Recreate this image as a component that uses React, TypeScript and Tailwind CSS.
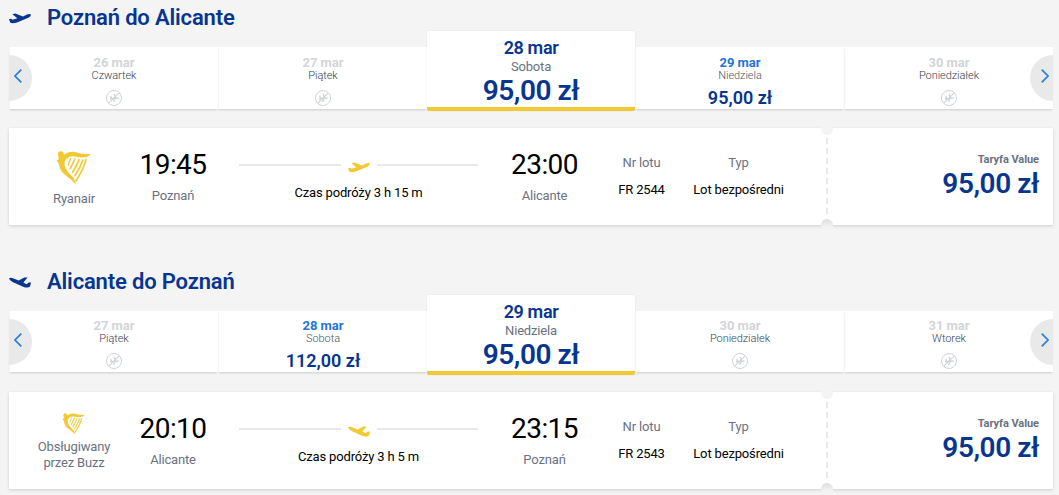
import React from 'react';

interface DayOption {
  date: string;
  weekday: string;
  price?: string;
  selected?: boolean;
}

type Direction = 'out' | 'back';

interface Flight {
  title: string;
  direction: Direction;
  days: DayOption[];
  carrier: string[];
  from: string;
  to: string;
  departure: string;
  arrival: string;
  duration: string;
  number: string;
  price: string;
}

const flights: Flight[] = [
  {
    title: 'Poznań do Alicante',
    direction: 'out',
    days: [
      { date: '26 mar', weekday: 'Czwartek' },
      { date: '27 mar', weekday: 'Piątek' },
      { date: '28 mar', weekday: 'Sobota', price: '95,00 zł', selected: true },
      { date: '29 mar', weekday: 'Niedziela', price: '95,00 zł' },
      { date: '30 mar', weekday: 'Poniedziałek' },
    ],
    carrier: ['Ryanair'],
    from: 'Poznań',
    to: 'Alicante',
    departure: '19:45',
    arrival: '23:00',
    duration: 'Czas podróży 3 h 15 m',
    number: 'FR 2544',
    price: '95,00 zł',
  },
  {
    title: 'Alicante do Poznań',
    direction: 'back',
    days: [
      { date: '27 mar', weekday: 'Piątek' },
      { date: '28 mar', weekday: 'Sobota', price: '112,00 zł' },
      { date: '29 mar', weekday: 'Niedziela', price: '95,00 zł', selected: true },
      { date: '30 mar', weekday: 'Poniedziałek' },
      { date: '31 mar', weekday: 'Wtorek' },
    ],
    carrier: ['Obsługiwany', 'przez Buzz'],
    from: 'Alicante',
    to: 'Poznań',
    departure: '20:10',
    arrival: '23:15',
    duration: 'Czas podróży 3 h 5 m',
    number: 'FR 2543',
    price: '95,00 zł',
  },
];

// --- ICONS ---
const PlaneIcon = ({ direction, className }: { direction: Direction; className: string }) => (
  <svg viewBox="0 0 66 32" className={className} fill="currentColor">
    {direction === 'out' ? (
      <path d="M0 18 L6 17 L11 20 L25 15 L10 3 L19 1 L42 10 L54 4 Q64 1 66 5 Q66 10 58 14 L24 28 Q12 32 4 29 Z" />
    ) : (
      <path d="M0 4 Q3 0 12 3 L29 10 L46 1 L56 1 L43 16 L53 21 L59 16 L66 16 L63 28 Q58 33 46 30 L12 15 Q1 9 0 4 Z" />
    )}
  </svg>
);

const HarpIcon = ({ className }: { className: string }) => (
  <svg viewBox="0 0 104 102" className={className} fill="currentColor">
    <circle cx="14" cy="10" r="9" />
    <path d="M7 16 L22 12 Q34 2 50 2 Q60 2 70 7 Q84 11 104 8 Q97 19 84 19 Q70 20 60 17 Q44 13 34 21 Q19 31 28 51 Q36 67 53 81 L60 102 Q48 86 30 74 Q10 60 8 38 L1 27 L7 26 Z" />
    <g fill="none" stroke="currentColor" strokeLinecap="round">
      <path d="M43 23 L36 42" strokeWidth="4" />
      <path d="M56 24 Q50 38 42 53" strokeWidth="5" />
      <path d="M69 26 Q62 44 49 64" strokeWidth="5" />
      <path d="M80 27 Q73 50 56 74" strokeWidth="5" />
      <path d="M89 26 Q84 52 59 90" strokeWidth="5" />
    </g>
  </svg>
);

const NoFlightIcon = () => (
  <svg viewBox="0 0 16 16" className="size-4 text-[#d0d3d7]" fill="none" stroke="currentColor">
    <circle cx="8" cy="8" r="7.5" />
    <path d="M2.8 13.2 L13.2 2.8" strokeWidth="1.1" />
    <path d="M4 8.7 L12.6 8 M8.2 4 L9.4 8 L7.6 12 M4.8 6 L5.8 9.5" strokeWidth="1.4" />
  </svg>
);

// --- DATE STRIP ---
const Day = ({ day, direction }: { day: DayOption; direction: Direction }) => {
  if (day.selected) {
    return (
      <button className="flex h-20 flex-1 flex-col items-center rounded-xs border-b-4 border-[#f1c933] bg-white pt-1.5 text-[#073590] shadow-[0_0_2px_rgba(0,0,0,0.08)]">
        <span className="text-lg/5.5 font-semibold tracking-[-0.02em]">{day.date}</span>
        <span className="text-[13px]/4 text-gray-500">{day.weekday}</span>
        <span className="text-[28px]/8 font-semibold tracking-[-0.016em]">{day.price}</span>
      </button>
    );
  }

  return (
    <button
      className={`mt-4 flex flex-1 flex-col items-center border-l border-[#f4f4f4] bg-white shadow-[0_2px_2px_-1px_rgba(0,0,0,0.17)] ${
        direction === 'out' ? 'h-[62px] pt-2' : 'h-[61px] pt-[7px]'
      }`}
    >
      <span
        className={`text-[13px]/[15px] font-bold tracking-normal ${day.price ? 'text-[#2374d4]' : 'text-[#d3d5d8]'}`}
      >
        {day.date}
      </span>
      <span className={`text-[11px]/3 font-light tracking-[-0.005em] ${day.price ? 'text-gray-600' : 'text-gray-700'}`}>
        {day.weekday}
      </span>
      {day.price ? (
        <span className="mt-1 text-lg/6 font-semibold tracking-normal text-[#073590]">{day.price}</span>
      ) : (
        <span className="mt-2">
          <NoFlightIcon />
        </span>
      )}
    </button>
  );
};

const ArrowButton = ({ side }: { side: 'left' | 'right' }) => (
  <button
    className={`absolute top-6 flex h-[46px] w-[23px] items-center bg-[#e9e9e9] pb-1 text-[#2680dc] ${
      side === 'left' ? 'left-0 rounded-r-full pl-[5px]' : 'right-0 rounded-l-full pl-[11px]'
    }`}
  >
    <svg viewBox="0 0 8 14" className="h-3.5 w-2" fill="none" stroke="currentColor" strokeWidth="1.7">
      <path d={side === 'left' ? 'M7.3 .6 L1 7 L7.3 13.4' : 'M.7 .6 L7 7 L.7 13.4'} />
    </svg>
  </button>
);

// --- FLIGHT CARD ---
const Place = ({ time, city }: { time: string; city: string }) => (
  <div className="flex w-20 flex-col items-center">
    <span className="text-[28px]/8 tracking-[-0.02em] text-black">{time}</span>
    <span className="mt-[7px] text-[13px]/4 text-gray-500">{city}</span>
  </div>
);

const FlightCard = ({ flight }: { flight: Flight }) => {
  const partner = flight.carrier.length > 1;
  return (
    <div className="relative mt-[17px] flex h-[97px] bg-white shadow-[0_1px_3px_rgba(0,0,0,0.16)]">
      <div className="flex w-[818px] pt-[21px]">
        <div className="flex w-[130px] flex-col items-center">
          <HarpIcon
            className={`mr-0.5 text-[#f1c933] ${partner ? 'mb-1 h-[22px] w-[23px]' : 'mt-0.5 mb-1.5 h-[34px] w-[35px]'}`}
          />
          {flight.carrier.map((line) => (
            <span key={line} className="text-[13px]/4 text-gray-500">
              {line}
            </span>
          ))}
        </div>
        <div className="ml-[-6px]">
          <Place time={flight.departure} city={flight.from} />
        </div>
        <div className="ml-[26px] flex w-[239px] flex-col items-center">
          <div className="flex h-8 w-full items-center gap-[7px]">
            <span className="h-0.5 flex-1 bg-[#e9e9e9]" />
            <PlaneIcon direction={flight.direction} className="mt-1 h-[11px] w-[22px] text-[#f1c933]" />
            <span className="h-0.5 flex-1 bg-[#e9e9e9]" />
          </div>
          <span className="mt-1 text-[13px]/4 text-black">{flight.duration}</span>
        </div>
        <div className="ml-[26.5px]">
          <Place time={flight.arrival} city={flight.to} />
        </div>
        <div className="ml-[17px] flex w-20 flex-col items-center gap-[11px] pt-1.5 text-[13px]/4">
          <span className="text-gray-500">Nr lotu</span>
          <span className="text-black">{flight.number}</span>
        </div>
        <div className="ml-[7px] flex w-[100px] flex-col items-center gap-[11px] pt-1.5 text-[13px]/4">
          <span className="text-gray-500">Typ</span>
          <span className="text-black">Lot bezpośredni</span>
        </div>
      </div>

      {/* perforation between the flight and its fare */}
      <div className="absolute top-[-6px] left-[812px] h-[13px] w-3 rounded-full bg-[#f4f4f4]" />
      <div className="absolute top-2.5 left-[817px] flex flex-col gap-1">
        {Array.from({ length: 8 }, (_, i) => (
          <span key={i} className="h-1.5 w-0.5 bg-[#e9e9e9]" />
        ))}
      </div>
      <div className="absolute top-[91px] left-[812px] h-[9px] w-3 rounded-t-full bg-linear-to-b from-[#dfdfdf] to-[#f4f4f4]" />

      <div className="flex flex-1 flex-col items-end pt-6 pr-[14px]">
        <span className="text-[11px]/4 font-bold tracking-[-0.005em] text-gray-500">Taryfa Value</span>
        <span className="text-[28px]/8 font-semibold tracking-[-0.015em] text-[#073590]">{flight.price}</span>
      </div>
    </div>
  );
};

const FlightSection = ({ flight }: { flight: Flight }) => (
  <section className="h-[264px] pr-1.5 pl-[9px]">
    <h2 className="flex h-[31px] items-center text-[22px]/8 font-semibold text-[#073590]">
      <PlaneIcon direction={flight.direction} className="mt-1.5 mr-4 h-[11px] w-[22px]" />
      <span className="pt-1">{flight.title}</span>
    </h2>
    <div className="relative flex">
      {flight.days.map((day) => (
        <Day key={day.date} day={day} direction={flight.direction} />
      ))}
      <ArrowButton side="left" />
      <ArrowButton side="right" />
    </div>
    <FlightCard flight={flight} />
  </section>
);

export default function App() {
  return (
    <main className="h-[495px] w-[1059px] overflow-hidden bg-[#f4f4f4] font-[Roboto,sans-serif] tracking-[-0.01em]">
      {flights.map((flight) => (
        <FlightSection key={flight.title} flight={flight} />
      ))}
    </main>
  );
}
